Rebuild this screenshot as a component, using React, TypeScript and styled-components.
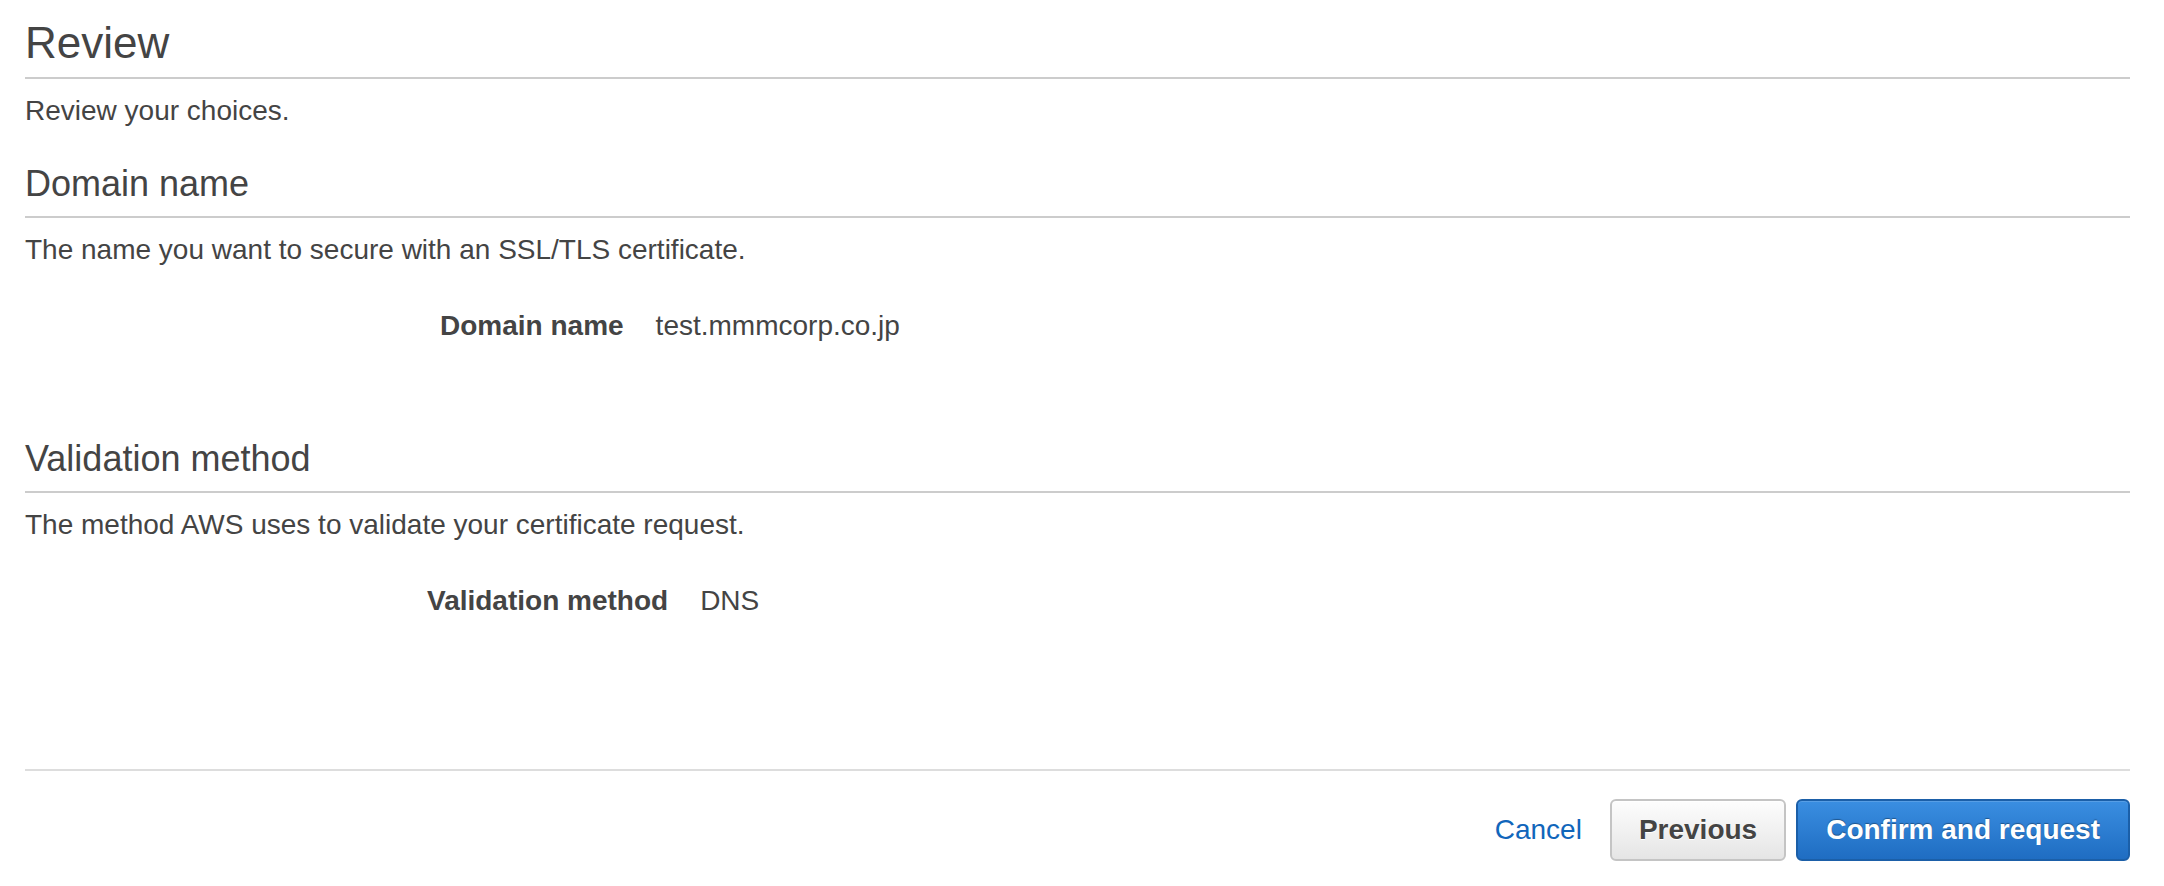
import React from "react";
import styled, { createGlobalStyle } from "styled-components";

const GlobalStyle = createGlobalStyle`
  html, body {
    margin: 0;
    padding: 0;
    background: #fff;
  }
  body {
    font-family: "Liberation Sans", Arial, Helvetica, sans-serif;
    color: #444;
  }
`;

const Page = styled.div`
  padding: 0 34px 0 25px;
`;

const TitleBar = styled.div`
  padding: 19px 0 10px;
  border-bottom: 2px solid #ccc;
`;

const Title = styled.h1`
  margin: 0;
  font-size: 44px;
  line-height: 48px;
  font-weight: normal;
  color: #444;
`;

const Description = styled.p`
  margin: 12px 0 0;
  font-size: 28px;
  line-height: 40px;
`;

const Section = styled.section`
  margin-top: 33px;
`;

const SectionHeading = styled.h2`
  margin: 0;
  padding-bottom: 12px;
  border-bottom: 2px solid #ccc;
  font-size: 36px;
  line-height: 40px;
  font-weight: normal;
  color: #444;
`;

const DetailRow = styled.div<{ $indent: number }>`
  display: flex;
  gap: 32px;
  margin-top: 36px;
  padding: 0 0 60px ${(p) => p.$indent}px;
  font-size: 28px;
  line-height: 40px;
`;

const DetailLabel = styled.span`
  font-weight: bold;
`;

const DetailValue = styled.span``;

const Footer = styled.div`
  margin-top: 88px;
  border-top: 2px solid #ddd;
  padding-top: 28px;
  display: flex;
  justify-content: flex-end;
  align-items: center;
`;

const CancelLink = styled.a`
  font-size: 28px;
  line-height: 40px;
  color: #1166bb;
  text-decoration: none;
  margin-right: 18px;
  cursor: pointer;
`;

const Button = styled.button<{ $primary?: boolean }>`
  height: 62px;
  padding: 0 ${(p) => (p.$primary ? 28 : 27)}px;
  margin-left: 10px;
  border-radius: 6px;
  font-family: "Liberation Sans", Arial, Helvetica, sans-serif;
  font-size: 28px;
  font-weight: bold;
  cursor: pointer;
  border: 2px solid ${(p) => (p.$primary ? "#1b5fa8" : "#c4c4c4")};
  color: ${(p) => (p.$primary ? "#fff" : "#444")};
  background: ${(p) =>
    p.$primary
      ? "linear-gradient(to bottom, #3a8ee1, #1f6dc2)"
      : "linear-gradient(to bottom, #fdfdfd, #e5e5e5)"};
  text-shadow: ${(p) =>
    p.$primary ? "0 -1px 1px rgba(0, 0, 0, 0.35)" : "0 1px 0 #fff"};
  box-shadow: ${(p) =>
    p.$primary ? "inset 0 1px 0 rgba(255,255,255,0.15)" : "inset 0 1px 0 #fff"};
`;

export default function App() {
  return (
    <Page>
      <GlobalStyle />
      <TitleBar>
        <Title>Review</Title>
      </TitleBar>
      <Description>Review your choices.</Description>

      <Section>
        <SectionHeading>Domain name</SectionHeading>
        <Description>The name you want to secure with an SSL/TLS certificate.</Description>
        <DetailRow $indent={415}>
          <DetailLabel>Domain name</DetailLabel>
          <DetailValue>test.mmmcorp.co.jp</DetailValue>
        </DetailRow>
      </Section>

      <Section>
        <SectionHeading>Validation method</SectionHeading>
        <Description>The method AWS uses to validate your certificate request.</Description>
        <DetailRow $indent={402}>
          <DetailLabel>Validation method</DetailLabel>
          <DetailValue>DNS</DetailValue>
        </DetailRow>
      </Section>

      <Footer>
        <CancelLink>Cancel</CancelLink>
        <Button>Previous</Button>
        <Button $primary>Confirm and request</Button>
      </Footer>
    </Page>
  );
}
